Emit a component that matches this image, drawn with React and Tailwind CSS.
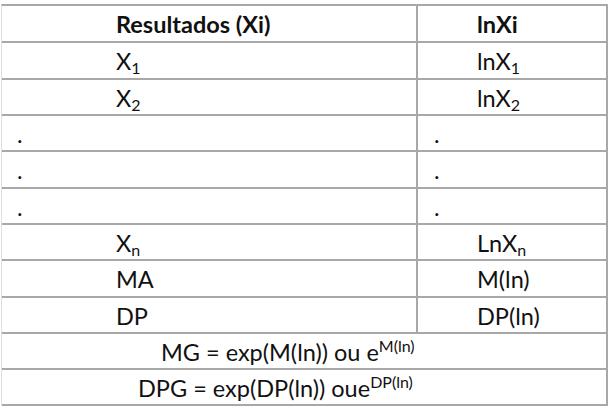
import React from "react";

const F = { fontFamily: "Lato, 'Open Sans', sans-serif" };

function Row({ h, left, right, leftClass = "pl-[114px]", rightClass = "pl-[59px]" }) {
  return (
    <div className={`flex border-b-2 border-[#a8a8a8] ${h}`}>
      <div className={`w-[416px] border-r-2 border-[#a8a8a8] flex items-center pt-[3px] ${leftClass}`}>{left}</div>
      <div className={`flex-1 flex items-center pt-[3px] ${rightClass}`}>{right}</div>
    </div>
  );
}

const Sub = ({ c }) => <sub className="text-[16px] relative top-[4px] align-baseline">{c}</sub>;
const Sup = ({ c }) => <sup className="text-[16px] relative -top-[9px] align-baseline">{c}</sup>;

export default function App() {
  return (
    <div className="w-[612px] h-[408px] bg-white pt-[4px] pl-[1px]" style={F}>
      <div className="w-[607px] border-t-2 border-l border-r-2 border-l-[#e0e0e0] border-[#a8a8a8] text-[23.5px] text-[#111] leading-none">
        <Row h="h-[37px]" left={<span className="font-bold">Resultados (Xi)</span>} right={<span className="font-bold">lnXi</span>} />
        <Row h="h-[37px]" left={<span>X<Sub c="1" /></span>} right={<span>lnX<Sub c="1" /></span>} />
        <Row h="h-[36px]" left={<span>X<Sub c="2" /></span>} right={<span>lnX<Sub c="2" /></span>} />
        <Row h="h-[36px]" leftClass="pl-[15px]" rightClass="pl-[16px]" left={<span>.</span>} right={<span>.</span>} />
        <Row h="h-[37px]" leftClass="pl-[15px]" rightClass="pl-[16px]" left={<span>.</span>} right={<span>.</span>} />
        <Row h="h-[36px]" leftClass="pl-[15px]" rightClass="pl-[16px]" left={<span>.</span>} right={<span>.</span>} />
        <Row h="h-[36px]" left={<span>X<Sub c="n" /></span>} right={<span>LnX<Sub c="n" /></span>} />
        <Row h="h-[37px]" left={<span>MA</span>} right={<span>M(ln)</span>} />
        <Row h="h-[36px]" left={<span>DP</span>} right={<span>DP(ln)</span>} />
        <div className="h-[36px] border-b-2 border-[#a8a8a8] flex items-center pt-[3px] pl-[159px]">
          <span>MG = exp(M(ln)) ou e<Sup c="M(ln)" /></span>
        </div>
        <div className="h-[36px] border-b-2 border-[#a8a8a8] flex items-center pt-[3px] pl-[136px]">
          <span>DPG = exp(DP(ln)) oue<Sup c="DP(ln)" /></span>
        </div>
      </div>
    </div>
  );
}
